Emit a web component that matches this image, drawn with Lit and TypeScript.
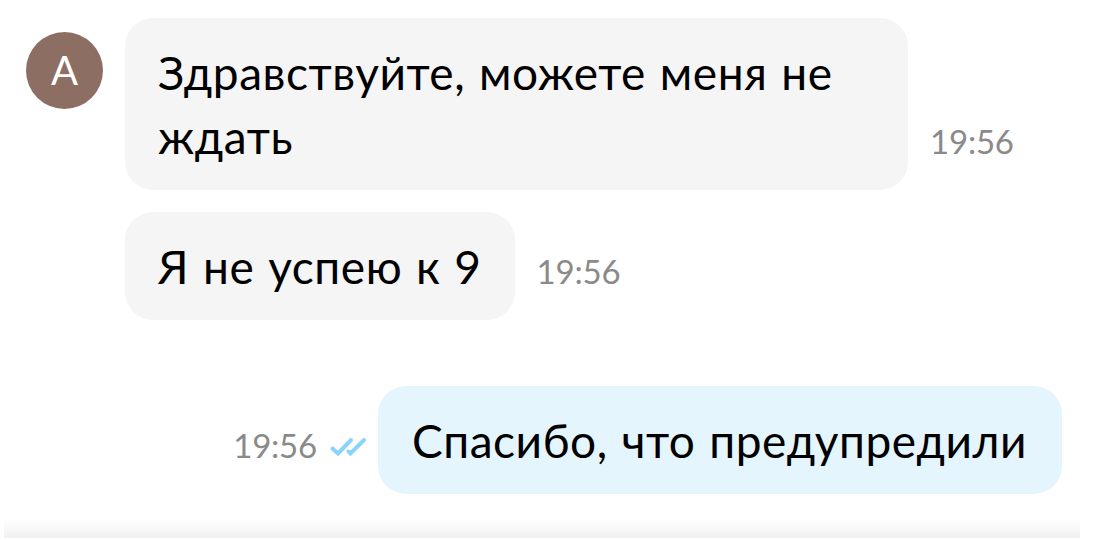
import { LitElement, html, css, svg, nothing } from "lit";
import { customElement, property } from "lit/decorators.js";

interface Message {
  text: string;
  time: string;
  own?: boolean;
  avatar?: string;
}

const messages: Message[] = [
  { text: "Здравствуйте, можете меня не ждать", time: "19:56", avatar: "A" },
  { text: "Я не успею к 9", time: "19:56" },
  { text: "Спасибо, что предупредили", time: "19:56", own: true },
];

@customElement("chat-message")
class ChatMessage extends LitElement {
  @property({ attribute: false }) message!: Message;

  static styles = css`
    :host {
      display: block;
    }

    .row {
      display: flex;
      align-items: flex-end;
    }

    .row.own {
      justify-content: flex-end;
    }

    .side {
      align-self: flex-start;
      flex: none;
      width: 99px;
      padding-top: 14px;
    }

    .avatar {
      display: flex;
      align-items: center;
      justify-content: center;
      box-sizing: border-box;
      width: 77px;
      height: 77px;
      padding-bottom: 1px;
      border-radius: 50%;
      background: #8d6e63;
      color: white;
      font-size: 40px;
      line-height: 1;
    }

    .bubble {
      box-sizing: border-box;
      max-width: 783px;
      padding: 23px 33px 21px;
      border-radius: 28px;
      background: #f5f5f5;
      color: black;
      font-size: 46px;
      line-height: 64px;
      letter-spacing: 0.57px;
      word-spacing: 1.5px;
    }

    .own .bubble {
      padding: 23px 35px 21px 34px;
      background: #e4f5fe;
    }

    .meta {
      display: flex;
      align-items: center;
      gap: 12px;
      padding: 0 0 29px 22px;
      color: #8a8a8a;
      font-size: 33px;
      line-height: 40px;
      letter-spacing: -0.2px;
    }

    .own .meta {
      padding: 0 11px 29px 0;
    }

    .ticks {
      display: block;
      width: 38px;
      height: 24px;
    }
  `;

  renderTicks() {
    return svg`
      <svg class="ticks" viewBox="0 0 38 24" fill="none" stroke="#8ad3fb" stroke-width="4" stroke-linecap="round">
        <path d="M3.5 15.5L9 20.5 22 7" />
        <path d="M19.5 18.5l2 2L35 7" />
      </svg>
    `;
  }

  render() {
    const { text, time, own, avatar } = this.message;
    const bubble = html`<div class="bubble">${text}</div>`;

    if (own) {
      return html`
        <div class="row own">
          <div class="meta"><span>${time}</span>${this.renderTicks()}</div>
          ${bubble}
        </div>
      `;
    }

    return html`
      <div class="row">
        <div class="side">
          ${avatar ? html`<div class="avatar">${avatar}</div>` : nothing}
        </div>
        ${bubble}
        <div class="meta">${time}</div>
      </div>
    `;
  }
}

@customElement("app-root")
class AppRoot extends LitElement {
  static styles = css`
    :host {
      display: flex;
      flex-direction: column;
      box-sizing: border-box;
      height: 540px;
      background: white;
      font-family: Lato, "Liberation Sans", sans-serif;
    }

    .list {
      display: flex;
      flex: 1;
      flex-direction: column;
      gap: 22px;
      padding: 18px 34px 0 26px;
    }

    .reply {
      margin-top: 44px;
    }

    .shade {
      height: 20px;
      margin: 0 16px 2px 4px;
      background: linear-gradient(white, #f1f1f1);
    }
  `;

  render() {
    return html`
      <div class="list">
        ${messages.map(
          (m) => html`<chat-message class=${m.own ? "reply" : ""} .message=${m}></chat-message>`
        )}
      </div>
      <div class="shade"></div>
    `;
  }
}
